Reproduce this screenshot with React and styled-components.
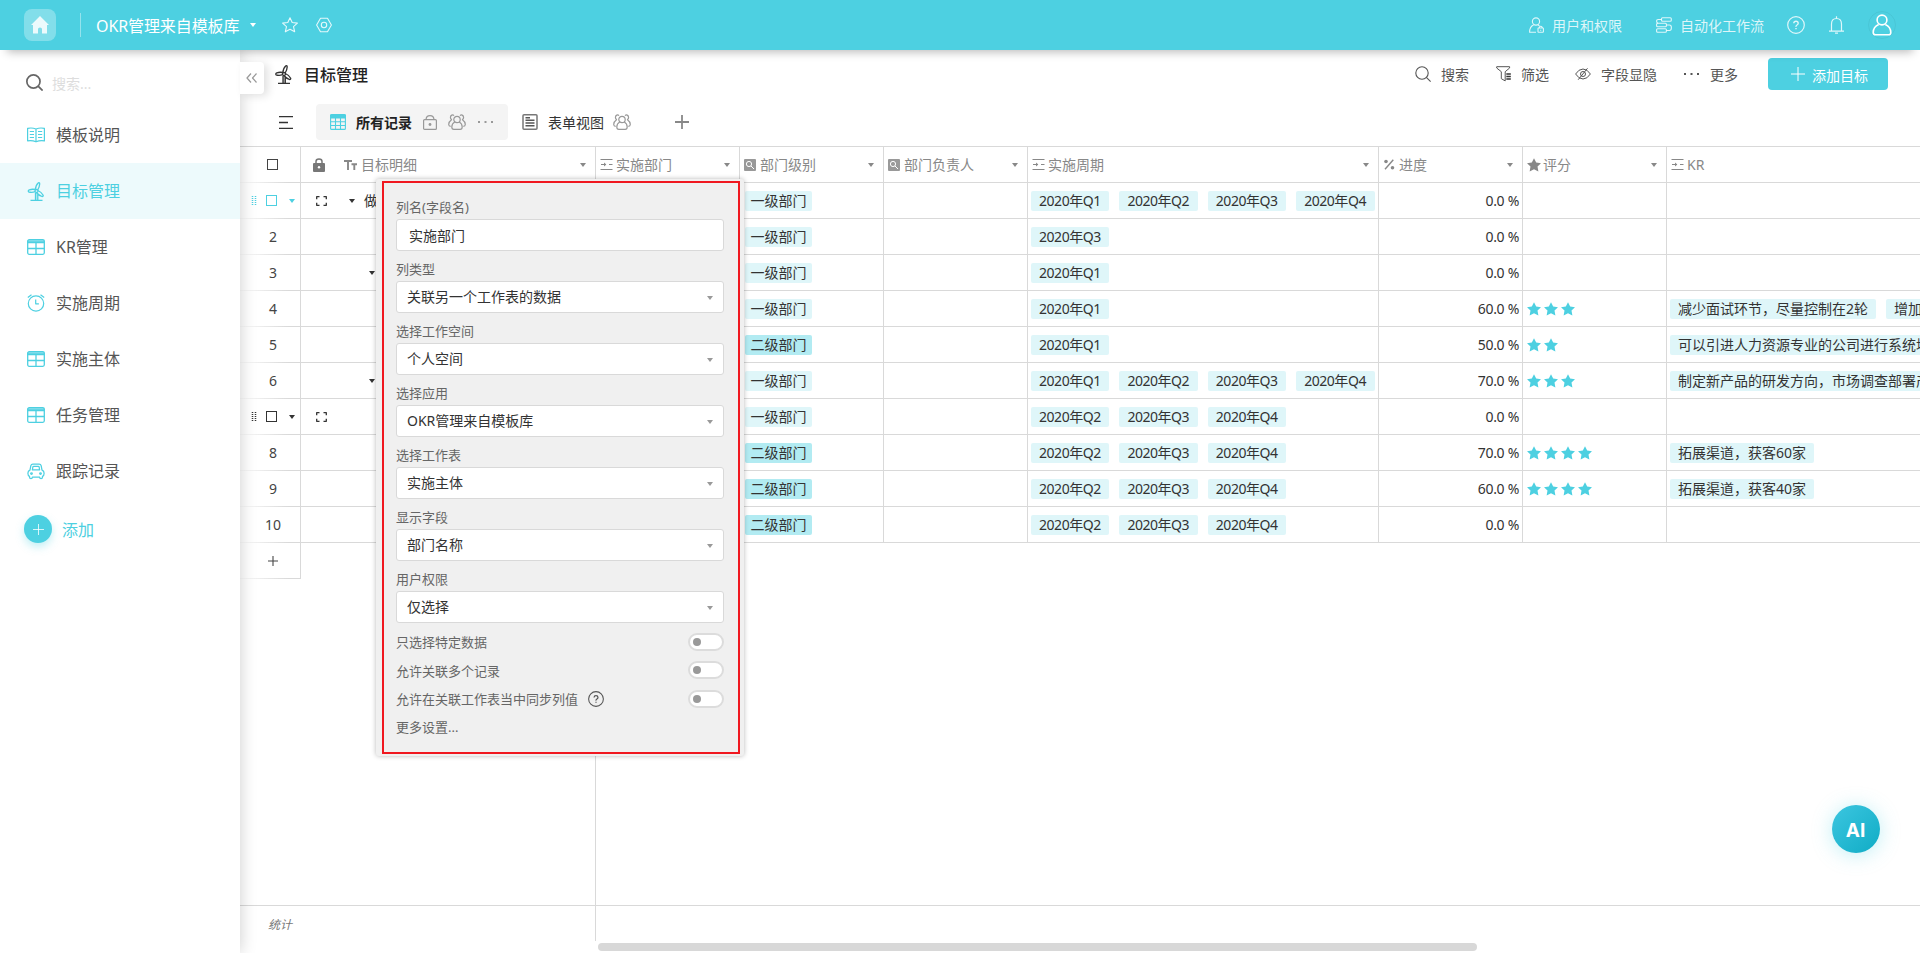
import React from 'react';
import styled, { createGlobalStyle, css } from 'styled-components';

const PRIMARY = '#4dd0e1';
const LINE = '#d9d9d9';

const GlobalStyle = createGlobalStyle`
    * { box-sizing: border-box; }
    body {
        margin: 0;
        overflow: hidden;
        background: #fff;
        color: #333;
        font-family: "Noto Sans", "Noto Sans CJK SC", sans-serif;
        font-size: 14px;
    }
    svg { display: block; flex: none; }
`;

const Page = styled.div`
    display: flex;
    flex-direction: column;
    width: 1920px;
    height: 953px;
    overflow: hidden;
`;

/* ---------- top bar ---------- */

const TopBar = styled.header`
    position: relative;
    z-index: 5;
    flex: none;
    display: flex;
    align-items: center;
    height: 50px;
    padding: 0 24px;
    background: ${PRIMARY};
    color: #fff;
    box-shadow: 0 9px 9px -7px rgba(0, 0, 0, .28);
`;

const HomeButton = styled.div`
    display: flex;
    align-items: center;
    justify-content: center;
    width: 32px;
    height: 32px;
    border-radius: 8px;
    background: rgba(255, 255, 255, .3);
`;

const TopDivider = styled.div`
    width: 1px;
    height: 24px;
    margin: 0 15px 0 24px;
    background: rgba(255, 255, 255, .4);
`;

const AppName = styled.div`
    width: 144px;
    margin-right: 10px;
    font-size: 16px;
    line-height: 24px;
    white-space: nowrap;
    letter-spacing: -.1px;
    padding-top: 2px;
`;

const TopIcons = styled.div`
    display: flex;
    gap: 18px;
    margin-left: 26px;
    color: rgba(255, 255, 255, .85);
`;

const TopRight = styled.div`
    display: flex;
    align-items: center;
    margin-left: auto;
    color: rgba(255, 255, 255, .82);
`;

const TopLink = styled.div`
    display: flex;
    align-items: center;
    gap: 8px;
    margin-right: ${p => p.$gap}px;
    line-height: 20px;
`;

const TopLinkText = styled.span`
    padding-top: 1px;
`;

const Avatar = styled.div`
    display: flex;
    align-items: center;
    justify-content: center;
    width: 28px;
    height: 28px;
    margin-left: 24px;
    border: 1px solid rgba(0, 0, 0, .05);
    border-radius: 50%;
    color: #fff;
`;

/* ---------- side bar ---------- */

const Body = styled.div`
    display: flex;
    flex: 1;
    min-height: 0;
`;

const SideBar = styled.nav`
    position: relative;
    z-index: 3;
    flex: none;
    width: 240px;
    background: #fff;
    box-shadow: 0 0 16px rgba(0, 0, 0, .2);
`;

const SideSearch = styled.div`
    display: flex;
    align-items: center;
    gap: 9px;
    height: 57px;
    padding: 8px 0 0 26px;
    color: #666;
`;

const Placeholder = styled.span`
    padding-top: 1px;
    color: #ddd;
`;

const SideItem = styled.div`
    display: flex;
    align-items: center;
    gap: 11px;
    height: 56px;
    padding-left: 27px;
    background: ${p => (p.$active ? '#edfafc' : 'transparent')};
    font-size: 16px;
    color: ${p => (p.$active ? PRIMARY : '#555')};

    svg { color: ${PRIMARY}; }
`;

const SideLabel = styled.span`
    line-height: 24px;
`;

const AddItem = styled.div`
    display: flex;
    align-items: center;
    gap: 10px;
    margin: 16px 0 0 24px;
    font-size: 16px;
    line-height: 24px;
    color: ${PRIMARY};
`;

const AddLabel = styled.span`
    padding-top: 2px;
`;

const AddCircle = styled.span`
    display: flex;
    align-items: center;
    justify-content: center;
    width: 28px;
    height: 28px;
    border-radius: 50%;
    background: ${PRIMARY};
    color: #fff;
    box-shadow: 0 4px 8px rgba(77, 208, 225, .35);
`;

/* ---------- main ---------- */

const Main = styled.main`
    position: relative;
    flex: 1;
    min-width: 0;
    display: flex;
    flex-direction: column;
`;

const Collapse = styled.div`
    position: absolute;
    z-index: 4;
    left: 0;
    top: 12px;
    display: flex;
    align-items: center;
    justify-content: center;
    width: 24px;
    height: 32px;
    border-radius: 0 4px 4px 0;
    background: #fff;
    color: #999;
    box-shadow: 4px 2px 8px rgba(0, 0, 0, .12);
`;

const TitleRow = styled.div`
    display: flex;
    align-items: center;
    height: 50px;
    padding: 0 32px 2px 35px;
`;

const Title = styled.h1`
    margin: 0 0 0 12px;
    padding-top: 2px;
    font-size: 16px;
    font-weight: 500;
    line-height: 24px;
    color: #222;
`;

const Actions = styled.div`
    display: flex;
    align-items: center;
    margin-left: auto;
    color: #555;
`;

const Action = styled.div`
    display: flex;
    align-items: center;
    gap: 10px;
    margin-right: ${p => p.$gap}px;
    line-height: 20px;
`;

const ActionText = styled.span`
    padding-top: 1px;
`;

const PrimaryButton = styled.div`
    display: flex;
    align-items: center;
    justify-content: center;
    gap: 7px;
    width: 120px;
    height: 32px;
    padding-left: 3px;
    border-radius: 4px;
    background: ${PRIMARY};
    color: #fff;
`;

const Views = styled.div`
    display: flex;
    align-items: center;
    height: 46px;
    padding: 0 0 2px 39px;
    color: #333;
`;

const ViewTab = styled.div`
    display: flex;
    align-items: center;
    gap: 11px;
    height: 36px;
    border-radius: 4px;
    color: #999;
    ${p => (p.$active ? css`
        width: 192px;
        margin-left: 23px;
        padding-left: 14px;
        background: #f4f4f4;
    ` : css`
        margin-left: 14px;
    `)}
`;

const ViewName = styled.span`
    margin: 0 ${p => (p.$active ? 0 : '-2px')} 0 -1px;
    padding-top: 1px;
    font-weight: ${p => (p.$active ? 700 : 400)};
    color: ${p => (p.$active ? '#222' : '#333')};
    line-height: 20px;
`;

const NewView = styled.div`
    margin-left: 44px;
    color: #888;
`;

/* ---------- table ---------- */

const Table = styled.div`
    display: flex;
    height: 795px;
    border-top: 1px solid ${LINE};
`;

const Frozen = styled.div`
    display: flex;
    flex-direction: column;
    flex: none;
    width: 356px;
    border-right: 1px solid ${LINE};
`;

const Scrolling = styled.div`
    display: flex;
    flex-direction: column;
    flex: 1;
    min-width: 0;
    overflow: hidden;
`;

const Row = styled.div`
    display: flex;
    flex: none;
    height: 36px;
`;

const Cell = styled.div`
    display: flex;
    align-items: center;
    flex: none;
    width: ${p => p.$w}px;
    height: 36px;
    padding: ${p => p.$pad || '0 3px'};
    border-right: 1px solid ${LINE};
    border-bottom: 1px solid ${LINE};
    white-space: nowrap;
    overflow: hidden;
    justify-content: ${p => (p.$right ? 'flex-end' : 'flex-start')};
    letter-spacing: ${p => (p.$right ? '-.3px' : '0')};
    gap: ${p => p.$gap || 0}px;
`;

const NameCell = styled(Cell)`
    width: auto;
    flex: 1;
    border-right: 0;
    padding-left: 15px;
`;

const IndexCell = styled.div`
    display: flex;
    align-items: center;
    justify-content: center;
    flex: none;
    width: 61px;
    height: 36px;
    padding: 0 0 1px 6px;
    border-right: 1px solid ${LINE};
    background: linear-gradient(to right, rgba(217, 217, 217, .1), ${LINE} 80%) left bottom / 100% 1px no-repeat;
    color: #444;
`;

const RowTools = styled.div`
    display: flex;
    align-items: center;
    width: 50px;
    margin-left: -3px;
    padding-left: 4px;
    color: ${p => (p.$active ? PRIMARY : '#333')};
`;

const CheckBox = styled.span`
    width: 11px;
    height: 11px;
    margin-left: ${p => p.$left || '-1px'};
    border: 1px solid currentColor;
`;

const Caret = styled.span`
    flex: none;
    width: 0;
    height: 0;
    margin-left: ${p => p.$left || 0};
    border: 3.5px solid transparent;
    border-top: 4px solid currentColor;
    border-bottom: 0;
    color: ${p => p.$color || 'inherit'};
`;

const HeadLabel = styled.span`
    margin-left: ${p => (p.$left === undefined ? 4 : p.$left)}px;
    line-height: 20px;
`;

const HeadCell = styled(Cell)`
    padding: 0 9px 0 4px;
    color: #888;
`;

const NameHead = styled(HeadCell)`
    width: auto;
    flex: 1;
    border-right: 0;
    padding-left: 12px;
`;

const Tag = styled.span`
    flex: none;
    height: 20px;
    line-height: 19px;
    padding: 0 ${p => p.$pad || 8}px;
    border-radius: 2px;
    background: ${p => (p.$dark ? '#b2ebf2' : '#dff6f9')};
`;

const PeriodTag = styled(Tag)`
    width: 78.4px;
    letter-spacing: -.46px;
`;

const Stats = styled.div`
    flex: none;
    height: 36px;
    margin-top: auto;
    padding: 10px 0 0 28px;
    border-top: 1px solid ${LINE};
    font-size: 12px;
    line-height: 18px;
    font-style: italic;
    color: #777;
`;

const ScrollThumb = styled.div`
    flex: none;
    width: 879px;
    height: 8px;
    margin: 2px 0 0 358px;
    border-radius: 4px;
    background: #d8d8d8;
`;

/* ---------- column settings popup ---------- */

const Popup = styled.div`
    position: absolute;
    z-index: 4;
    left: 136px;
    top: 129px;
    width: 368px;
    height: 577px;
    padding: 2px 4px 2px 6px;
    border-radius: 3px;
    background: #f0f0f0;
    box-shadow: 0 0 5px rgba(0, 0, 0, .28);
`;

const PopupFrame = styled.div`
    height: 573px;
    padding: 14px 14px 0 12px;
    border: 2px solid #f01820;
    font-size: 13px;
    line-height: 20px;
    color: #666;
`;

const Field = styled.div`
    height: 62px;
`;

const FieldLabel = styled.div`
    height: 22px;
`;

const FieldBox = styled.div`
    display: flex;
    align-items: center;
    justify-content: space-between;
    height: 32px;
    padding: ${p => (p.$input ? '1px 9px 0 12px' : '0 10px 1px 10px')};
    border: 1px solid ${LINE};
    border-radius: 3px;
    background: #fff;
    font-size: 14px;
    color: #333;
`;

const FieldCaret = styled(Caret)`
    margin-top: 3px;
`;

const Toggles = styled.div`
    margin-top: -3px;
`;

const ToggleRow = styled.div`
    display: flex;
    align-items: center;
    height: ${p => p.$h || 28}px;
`;

const Toggle = styled.span`
    display: flex;
    align-items: center;
    width: 36px;
    height: 18px;
    margin: -1px 0 0 auto;
    padding-left: 3px;
    border: 2px solid #dcdcdc;
    border-radius: 9px;
    background: #fff;

    &::before {
        content: '';
        width: 8px;
        height: 8px;
        border-radius: 50%;
        background: #999;
    }
`;

const HelpWrap = styled.span`
    margin: -1px 0 0 10px;
    color: #555;
`;

const AiButton = styled.div`
    position: absolute;
    right: 40px;
    bottom: 100px;
    display: flex;
    align-items: center;
    justify-content: center;
    width: 48px;
    height: 48px;
    padding: 2px 1px 0 0;
    border-radius: 50%;
    background: linear-gradient(135deg, #3cc6e0, #10acc5);
    box-shadow: 0 2px 20px rgba(77, 208, 225, .35);
    color: #fff;
    font-family: Inter, "Liberation Sans", sans-serif;
    font-size: 19px;
    font-weight: 700;
`;

/* ---------- icons ---------- */

const Svg = ({ w = 16, h = w, box = '0 0 16 16', sw = 1, children }) => (
    <svg width={w} height={h} viewBox={box} fill="none" stroke="currentColor" strokeWidth={sw} strokeLinejoin="round">
        {children}
    </svg>
);

const IconHome = () => (
    <Svg w={18} box="0 0 18 18">
        <path d="M9 0 0 9h2v8.500h5V13q0-1.500 2-1.500t2 1.500v4.500h5V9h2z" fill="#fff" fillOpacity=".85" stroke="none" />
    </Svg>
);
const IconStar = () => (
    <Svg sw={1.100}><path d="m8 .8 2.200 4.700 5.200.6-3.900 3.500 1.200 5.200L8 12.300l-4.700 2.500 1.200-5.200L.6 6.100l5.200-.6z" /></Svg>
);
const IconHex = () => (
    <Svg sw={1.100}><path d="M4.500 1.200h7L15.400 8l-3.900 6.800h-7L.6 8z" /><circle cx="8" cy="8" r="2.700" /></Svg>
);
const IconUserLock = () => (
    <Svg w={15} h={16} box="0 0 15 16" sw={1.100}>
        <circle cx="7" cy="4.500" r="3.600" />
        <path d="M7 15.300H.6c0-4 1.800-6.600 4-7.400M9 8l1.500.8" />
        <rect x="9" y="11" width="5.400" height="4.300" rx=".6" />
        <path d="M10.300 11v-.8q1.400-1.800 2.800 0v.8M11.700 12.700v1" />
    </Svg>
);
// three stages joined in an S: top right -> middle left -> bottom left
const IconFlow = () => (
    <Svg sw={1.100}>
        <rect x="5.500" y=".7" width="9.800" height="3.600" rx="1" />
        <rect x=".6" y="6.200" width="9.800" height="3.600" rx="1" />
        <rect x=".6" y="11.700" width="9.800" height="3.600" rx="1" />
        <path d="M5.500 2.500H2.200Q.6 2.500.6 4.200t1.600 2M10.400 8h3q2 0 2 2.700t-2 2.800h-3" />
    </Svg>
);
const IconHelp = ({ size = 18 }) => (
    <Svg w={size} box="0 0 18 18" sw={1.200}>
        <circle cx="9" cy="9" r="8.300" />
        <path d="M6.800 7.300Q6.900 5.300 9 5.300t2.200 1.900Q11.200 8.300 10 9T9 10.900M9 12v1.200" strokeWidth="1.400" />
    </Svg>
);
const IconBell = () => (
    <Svg w={15} h={18} box="0 0 15 18" sw={1.200}>
        <path d="M2.500 15V8q0-5.500 5-5.500t5 5.500v7M0 15.200h15M7.500.3v2M6 17.200h3" />
    </Svg>
);
const IconUser = () => (
    <Svg w={20} h={22} box="0 0 20 22" sw={1.600}>
        <circle cx="10" cy="6" r="4.900" />
        <path d="M6.700 10.500Q1.300 12.800 1.200 18.500q0 2.300 2.200 2.300h13.200q2.200 0 2.200-2.300-.1-5.700-5.500-8" />
    </Svg>
);
const IconSearch = ({ w = 18, sw = 1.3 }) => (
    <Svg w={w} sw={sw}><circle cx="7" cy="7" r="6.200" /><path d="m11.400 11.400 4.200 4.200" /></Svg>
);
const IconBook = () => (
    <Svg w={18} h={16} box="0 0 18 16" sw={1.200}>
        <path d="M9 2Q5 .4.600 1.400v12.400Q5 13 9 14.800q4-1.800 8.400-1V1.400Q13 .4 9 2v12.800M2.800 4.500H7M2.800 7.500H7M2.800 10.500H7M11 4.500h4.200M11 7.500h4.200M11 10.500h4.200" />
    </Svg>
);
const IconMill = ({ w = 17 }) => (
    <Svg w={w} h={19} box="0 0 17 19" sw={1.300}>
        <path d="M8 11.500h2.300V18H8z" fill="currentColor" fillOpacity=".35" stroke="none" />
        <circle cx="9" cy="9" r="1.500" />
        <path d="M7.800 7.900Q8.200 3 10.700.9q1.500-.6 1.500 1-.2 3.400-2.100 6.200M7.700 9.700Q4 10.800 1 9.800.300 8.500 1.800 7.800q2.900-.9 5.800-.3M10.300 8.500q3.500 1.500 5.400 4.800.2 1.300-1.200 1.200-3.400-1.200-5.500-4M8 11v7M10.300 12.500V18M3 18.300h12" />
    </Svg>
);
const IconSheet = () => (
    <Svg w={18} h={16} box="0 0 18 16" sw={1.300}>
        <rect x=".7" y=".7" width="16.600" height="14.600" rx="1.500" />
        <path d="M.6 1.200h16.800v2.100H.6z" fill="currentColor" fillOpacity=".8" stroke="none" />
        <path d="M.6 3.500h16.800M.6 9.500h16.800M9 3.500v11.900" />
    </Svg>
);
const IconClock = () => (
    <Svg w={18} box="0 0 18 18" sw={1.200}>
        <circle cx="9" cy="9.500" r="7.700" />
        <path d="M8.700 5.500v4.300h3.200M.800 3.500 4.500.700M17.200 3.500 13.500.700" />
    </Svg>
);
const IconCar = () => (
    <Svg w={18} h={17} box="0 0 20 18" sw={1.400}>
        <path d="M3.300 7.500 4.300 2.500Q4.700.8 6.500.8h7q1.800 0 2.200 1.700l1 5q2.300.8 2.300 3.500t-1.800 3.500v1q0 1.400-1.600 1.400T14 15.300H6q0 1.600-1.600 1.600t-1.600-1.400v-1Q1 13.700 1 11t2.300-3.500z" />
        <path d="M6 7.200 6.500 4q.2-.8 1-.8h5q.8 0 1 .8l.5 3.200z" />
        <circle cx="5" cy="11.300" r=".9" /><circle cx="15" cy="11.300" r=".9" />
    </Svg>
);
const IconPlus = ({ w = 14, sw = 1 }) => (
    <Svg w={w} box="0 0 14 14" sw={sw}><path d="M7 0v14M0 7h14" /></Svg>
);
const IconDoubleLeft = () => (
    <Svg w={12} h={10} box="0 0 12 10" sw={1.200}><path d="M5 .5 1 5l4 4.500M10.500.5l-4 4.500 4 4.500" /></Svg>
);
const IconFilter = () => (
    <Svg w={15} h={16} box="0 0 15 16">
        <path d="M.7.7h12.900v1.300L9.200 5.700v9.200L5.300 12.700v-7L.7 2z" />
        <path d="M10.300 8h4.500M10.300 10.500h4.500M10.300 13h4.500" strokeWidth="1.500" stroke="#333" />
    </Svg>
);
const IconEyeOff = () => (
    <Svg w={16} h={12} box="0 0 16 12">
        <path d="M.6 6Q3.800 1 8 1t7.400 5Q12.200 11 8 11T.6 6zM12.500.3l-9.300 11.400" />
        <circle cx="8" cy="6" r="2.500" />
    </Svg>
);
const IconDots = () => (
    <Svg w={17} h={4} box="0 0 17 4">
        <path d="M1 1h2v2H1zM7.500 1h2v2h-2zM14 1h2v2h-2z" fill="currentColor" stroke="none" />
    </Svg>
);
const IconMenu = () => (
    <Svg w={14} h={13} box="0 0 14 13" sw={1.300}><path d="M0 .7h14M0 6.500h9M0 12.300h14" /></Svg>
);
const IconGrid = () => (
    <Svg sw={1.100}>
        <g color={PRIMARY} stroke="currentColor">
            <rect x=".6" y=".6" width="14.800" height="14.800" rx="1" />
            <path d="M.6 1h14.800v3H.6z" fill="currentColor" />
            <path d="M.6 7.800h14.800M.6 11.500h14.800M5.500 4v11.400M10.500 4v11.400" />
        </g>
    </Svg>
);
const IconLock = () => (
    <Svg w={14} h={15} box="0 0 14 15" sw={1.200}>
        <rect x=".6" y="4.600" width="12.800" height="9.800" rx="1" />
        <path d="M3 4.500Q3.300.6 7 .6t4 3.900" />
        <circle cx="7" cy="9.500" r="1.400" fill="currentColor" stroke="none" />
    </Svg>
);
const IconPeople = () => (
    <Svg w={18} h={16} box="0 0 18 16" sw={1.200}>
        <circle cx="9" cy="5.500" r="3.200" />
        <path d="M6.800 8Q3.800 9.500 3.800 13q0 2.300 2 2.300h6.400q2 0 2-2.300 0-3.500-3-5M6 1.600Q5 .6 3.800 1.100 2 2 2.600 4.400l.9 1.300Q.8 7.500.7 10.500q.1 1.800 2 1.800M12 1.600q1-1 2.200-.5Q16 2 15.400 4.400l-.9 1.300q2.700 1.800 2.800 4.800-.1 1.800-2 1.800" />
    </Svg>
);
const IconForm = () => (
    <Svg w={16} sw={1.500}>
        <rect x="1" y=".8" width="14" height="14.400" rx="1" stroke="#777" />
        <path d="M3.500 3.800h4.500M3.500 6.300h9M3.500 9h9M3.500 11.800h9" strokeWidth="1.500" stroke="#555" />
    </Svg>
);
const IconLockSolid = () => (
    <Svg w={12} h={14} box="0 0 12 14">
        <rect x="0" y="5" width="12" height="9" rx="1" fill="#777" stroke="none" />
        <path d="M3 6V3.500Q3 1 6 1t3 2.500V6" stroke="#777" strokeWidth="1.500" />
        <circle cx="6" cy="9.300" r="1.200" fill="#fff" stroke="none" />
    </Svg>
);
const IconText = () => (
    <Svg w={13} h={10} box="0 0 13 10" sw={1.900}><path d="M0 1h8M4 1v9M7.500 4.200H13M10.300 4.200V10" /></Svg>
);
const IconLink = () => (
    <Svg w={13} h={11} box="0 0 13 11">
        <path d="M.5.5h12M.5 10.500h12M1 5.500h5M9 5.500h3.500" />
        <path d="M4 3.500 6.300 5.500 4 7.500z" fill="currentColor" stroke="none" />
    </Svg>
);
const IconLookup = () => (
    <Svg w={12} h={12} box="0 0 12 12">
        <rect width="12" height="12" rx="1" fill="#999" stroke="none" />
        <circle cx="5" cy="5" r="2.600" stroke="#fff" /><path d="m7 7 3 3" stroke="#fff" />
    </Svg>
);
const IconPercent = () => (
    <Svg w={12} h={11} box="0 0 12 11" sw={1.400}>
        <path d="M10.300.8 2 10.200" />
        <g fill="currentColor" stroke="none">
            <circle cx="3" cy="2.500" r="1.800" /><circle cx="9.500" cy="8.700" r="1.800" />
        </g>
    </Svg>
);
const IconStarSolid = ({ color }) => (
    <Svg w={14}><path d="m8 .2 2.500 5 5.500.7-4 3.900 1 5.700-5-2.600-5 2.600 1-5.700-4-3.900 5.500-.7z" fill={color} stroke="none" /></Svg>
);
const IconExpand = () => (
    <Svg w={11} h={10} box="0 0 11 10" sw={1.300}>
        <path d="M3.500.7H.7v2.500M7.500.7h2.800v2.500M3.500 9.300H.7V6.800M7.500 9.300h2.800V6.800" />
    </Svg>
);
const IconDrag = () => (
    <Svg w={6} h={10} box="0 0 6 10">
        <path d="M1.500 0v10M4.500 0v10" strokeDasharray="1 1" strokeWidth="1.500" />
    </Svg>
);

/* ---------- data ---------- */

const sideItems = [
    { name: '模板说明', icon: <IconBook /> },
    { name: '目标管理', icon: <IconMill w={18} />, active: true },
    { name: 'KR管理', icon: <IconSheet /> },
    { name: '实施周期', icon: <IconClock /> },
    { name: '实施主体', icon: <IconSheet /> },
    { name: '任务管理', icon: <IconSheet /> },
    { name: '跟踪记录', icon: <IconCar /> }
];

const columns = [
    { name: '实施部门', width: 144, icon: <IconLink />, gap: 3 },
    { name: '部门级别', width: 144, icon: <IconLookup /> },
    { name: '部门负责人', width: 144, icon: <IconLookup /> },
    { name: '实施周期', width: 351, icon: <IconLink />, gap: 3 },
    { name: '进度', width: 144, icon: <IconPercent /> },
    { name: '评分', width: 144, icon: <IconStarSolid color="#888" />, gap: 2 },
    { name: 'KR', width: 400, icon: <IconLink />, gap: 3 }
];

const rows = [
    { level: 1, periods: [1, 2, 3, 4], progress: '0.0 %', title: '做', tools: true, active: true },
    { level: 1, periods: [3], progress: '0.0 %' },
    { level: 1, periods: [1], progress: '0.0 %', caret: true },
    { level: 1, periods: [1], progress: '60.0 %', stars: 3, kr: ['减少面试环节，尽量控制在2轮', '增加'] },
    { level: 2, periods: [1], progress: '50.0 %', stars: 2, kr: ['可以引进人力资源专业的公司进行系统培'] },
    { level: 1, periods: [1, 2, 3, 4], progress: '70.0 %', stars: 3, caret: true, kr: ['制定新产品的研发方向，市场调查部署产'] },
    { level: 1, periods: [2, 3, 4], progress: '0.0 %', tools: true },
    { level: 2, periods: [2, 3, 4], progress: '70.0 %', stars: 4, kr: ['拓展渠道，获客60家'] },
    { level: 2, periods: [2, 3, 4], progress: '60.0 %', stars: 4, kr: ['拓展渠道，获客40家'] },
    { level: 2, periods: [2, 3, 4], progress: '0.0 %' }
];

const fields = [
    { label: '列名(字段名)', value: '实施部门', input: true },
    { label: '列类型', value: '关联另一个工作表的数据' },
    { label: '选择工作空间', value: '个人空间' },
    { label: '选择应用', value: 'OKR管理来自模板库' },
    { label: '选择工作表', value: '实施主体' },
    { label: '显示字段', value: '部门名称' },
    { label: '用户权限', value: '仅选择' }
];

function Header() {
    return (
        <TopBar>
            <HomeButton><IconHome /></HomeButton>
            <TopDivider />
            <AppName>OKR管理来自模板库</AppName>
            <Caret />
            <TopIcons>
                <IconStar />
                <IconHex />
            </TopIcons>
            <TopRight>
                <TopLink $gap={34}><IconUserLock /><TopLinkText>用户和权限</TopLinkText></TopLink>
                <TopLink $gap={23}><IconFlow /><TopLinkText>自动化工作流</TopLinkText></TopLink>
                <TopLink $gap={24}><IconHelp /></TopLink>
                <IconBell />
                <Avatar><IconUser /></Avatar>
            </TopRight>
        </TopBar>
    );
}

function Side() {
    return (
        <SideBar>
            <SideSearch>
                <IconSearch w={17} sw={1.6} />
                <Placeholder>搜索...</Placeholder>
            </SideSearch>
            {sideItems.map((item, idx) => (
                <SideItem key={idx} $active={item.active}>
                    {item.icon}
                    <SideLabel>{item.name}</SideLabel>
                </SideItem>
            ))}
            <AddItem>
                <AddCircle><IconPlus w={11} /></AddCircle>
                <AddLabel>添加</AddLabel>
            </AddItem>
        </SideBar>
    );
}

function FrozenColumns() {
    return (
        <Frozen>
            <Row>
                <IndexCell><CheckBox /></IndexCell>
                <NameHead>
                    <IconLockSolid />
                    <Caret $left="13px" $color="transparent" />
                    <IconText />
                    <HeadLabel>目标明细</HeadLabel>
                    <Caret $left="auto" />
                </NameHead>
            </Row>
            {rows.map((row, idx) => (
                <Row key={idx}>
                    <IndexCell>
                        {row.tools ? (
                            <RowTools $active={row.active}>
                                <IconDrag />
                                <CheckBox $left="9px" />
                                <Caret $left="12px" />
                            </RowTools>
                        ) : idx + 1}
                    </IndexCell>
                    <NameCell>
                        {row.tools && <IconExpand />}
                        {row.title && <Caret $left="22px" />}
                        {row.title && <HeadLabel $left={9}>{row.title}</HeadLabel>}
                        {row.caret && <Caret $left="53px" />}
                    </NameCell>
                </Row>
            ))}
            <Row><IndexCell><IconPlus w={10} sw={1.500} /></IndexCell></Row>
            <Stats>统计</Stats>
        </Frozen>
    );
}

function DataColumns() {
    return (
        <Scrolling>
            <Row>
                {columns.map((col, idx) => (
                    <HeadCell key={idx} $w={col.width}>
                        {col.icon}
                        <HeadLabel $left={col.gap}>{col.name}</HeadLabel>
                        <Caret $left="auto" />
                    </HeadCell>
                ))}
            </Row>
            {rows.map((row, idx) => (
                <Row key={idx}>
                    <Cell $w={144} />
                    <Cell $w={144} $pad="0 5px">
                        <Tag $pad={5.5} $dark={row.level === 2}>{row.level === 2 ? '二级部门' : '一级部门'}</Tag>
                    </Cell>
                    <Cell $w={144} />
                    <Cell $w={351} $gap={10}>
                        {row.periods.map(q => <PeriodTag key={q}>2020年Q{q}</PeriodTag>)}
                    </Cell>
                    <Cell $w={144} $right>{row.progress}</Cell>
                    <Cell $w={144} $gap={3} $pad="0 4px">
                        {Array.from({ length: row.stars || 0 }, (_, i) => <IconStarSolid key={i} color={PRIMARY} />)}
                    </Cell>
                    <Cell $w={400} $gap={10}>
                        {(row.kr || []).map(text => <Tag key={text}>{text}</Tag>)}
                    </Cell>
                </Row>
            ))}
            <Stats />
        </Scrolling>
    );
}

function ColumnSettings() {
    return (
        <Popup>
            <PopupFrame>
                {fields.map(field => (
                    <Field key={field.label}>
                        <FieldLabel>{field.label}</FieldLabel>
                        <FieldBox $input={field.input}>
                            {field.value}
                            {!field.input && <FieldCaret $color="#999" />}
                        </FieldBox>
                    </Field>
                ))}
                <Toggles>
                    <ToggleRow>只选择特定数据<Toggle /></ToggleRow>
                    <ToggleRow $h={29}>允许关联多个记录<Toggle /></ToggleRow>
                    <ToggleRow>
                        允许在关联工作表当中同步列值
                        <HelpWrap><IconHelp size={16} /></HelpWrap>
                        <Toggle />
                    </ToggleRow>
                    <ToggleRow>更多设置...</ToggleRow>
                </Toggles>
            </PopupFrame>
        </Popup>
    );
}

function App() {
    return (
        <Page>
            <GlobalStyle />
            <Header />
            <Body>
                <Side />
                <Main>
                    <Collapse><IconDoubleLeft /></Collapse>
                    <TitleRow>
                        <IconMill />
                        <Title>目标管理</Title>
                        <Actions>
                            <Action $gap={27}><IconSearch w={16} sw={1.1} /><ActionText>搜索</ActionText></Action>
                            <Action $gap={26}><IconFilter /><ActionText>筛选</ActionText></Action>
                            <Action $gap={26}><IconEyeOff /><ActionText>字段显隐</ActionText></Action>
                            <Action $gap={30}><IconDots /><ActionText>更多</ActionText></Action>
                            <PrimaryButton><IconPlus /><ActionText>添加目标</ActionText></PrimaryButton>
                        </Actions>
                    </TitleRow>
                    <Views>
                        <IconMenu />
                        <ViewTab $active>
                            <IconGrid />
                            <ViewName $active>所有记录</ViewName>
                            <IconLock />
                            <IconPeople />
                            <IconDots />
                        </ViewTab>
                        <ViewTab>
                            <IconForm />
                            <ViewName>表单视图</ViewName>
                            <IconPeople />
                        </ViewTab>
                        <NewView><IconPlus sw={1.800} /></NewView>
                    </Views>
                    <Table>
                        <FrozenColumns />
                        <DataColumns />
                    </Table>
                    <ScrollThumb />
                    <ColumnSettings />
                    <AiButton>AI</AiButton>
                </Main>
            </Body>
        </Page>
    );
}

export default App;
